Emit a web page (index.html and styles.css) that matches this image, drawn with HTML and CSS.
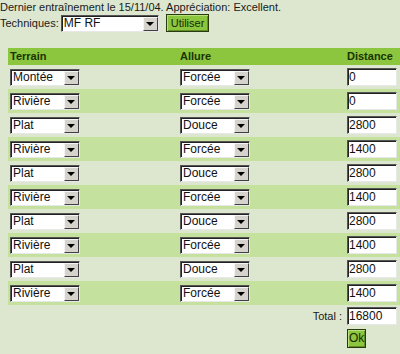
FILE: index.html
```html
<!DOCTYPE html>
<html lang="fr">
<head>
<meta charset="utf-8">
<link rel="stylesheet" href="styles.css">
</head>
<body>
<div class="info">Dernier entraînement le 15/11/04. Appréciation: Excellent.</div>
<div class="tech">
  <span class="lbl">Techniques:</span>
  <span class="sel sel-tech"><select><option>MF RF</option></select></span>
  <button class="btn btn-use">Utiliser</button>
</div>
<table class="grid">
  <thead>
    <tr><th class="c1">Terrain</th><th class="c2">Allure</th><th class="c3">Distance</th></tr>
  </thead>
  <tbody>
    <tr><td><span class="sel"><select><option>Montée</option></select></span></td><td><span class="sel"><select><option>Forcée</option></select></span></td><td><input class="num" value="0"></td></tr>
    <tr class="alt"><td><span class="sel"><select><option>Rivière</option></select></span></td><td><span class="sel"><select><option>Forcée</option></select></span></td><td><input class="num" value="0"></td></tr>
    <tr><td><span class="sel"><select><option>Plat</option></select></span></td><td><span class="sel"><select><option>Douce</option></select></span></td><td><input class="num" value="2800"></td></tr>
    <tr class="alt"><td><span class="sel"><select><option>Rivière</option></select></span></td><td><span class="sel"><select><option>Forcée</option></select></span></td><td><input class="num" value="1400"></td></tr>
    <tr><td><span class="sel"><select><option>Plat</option></select></span></td><td><span class="sel"><select><option>Douce</option></select></span></td><td><input class="num" value="2800"></td></tr>
    <tr class="alt"><td><span class="sel"><select><option>Rivière</option></select></span></td><td><span class="sel"><select><option>Forcée</option></select></span></td><td><input class="num" value="1400"></td></tr>
    <tr><td><span class="sel"><select><option>Plat</option></select></span></td><td><span class="sel"><select><option>Douce</option></select></span></td><td><input class="num" value="2800"></td></tr>
    <tr class="alt"><td><span class="sel"><select><option>Rivière</option></select></span></td><td><span class="sel"><select><option>Forcée</option></select></span></td><td><input class="num" value="1400"></td></tr>
    <tr><td><span class="sel"><select><option>Plat</option></select></span></td><td><span class="sel"><select><option>Douce</option></select></span></td><td><input class="num" value="2800"></td></tr>
    <tr class="alt"><td><span class="sel"><select><option>Rivière</option></select></span></td><td><span class="sel"><select><option>Forcée</option></select></span></td><td><input class="num" value="1400"></td></tr>
    <tr class="foot"><td colspan="2" class="total">Total :</td><td><input class="num" value="16800"></td></tr>
    <tr class="foot"><td colspan="2"></td><td><button class="btn btn-ok">Ok</button></td></tr>
  </tbody>
</table>
</body>
</html>
```
FILE: styles.css
```css
html, body {
  margin: 0;
  padding: 0;
  background: #dde7cf;
  font-family: "Liberation Sans", Arial, sans-serif;
  font-size: 11px;
  color: #1a1a1a;
  overflow: hidden;
}
.info {
  padding: 1px 0 0 0;
  height: 12px;
  line-height: 12px;
}
.tech {
  display: flex;
  align-items: center;
  height: 18px;
  margin-top: 1px;
}
.lbl {
  margin-right: 2px;
}
.sel {
  position: relative;
  display: inline-block;
  width: 70px;
  height: 17px;
  vertical-align: middle;
}
.sel-tech {
  width: 98px;
}
.sel select {
  -webkit-appearance: none;
  appearance: none;
  width: 100%;
  height: 100%;
  box-sizing: border-box;
  margin: 0;
  padding: 0 0 0 2px;
  background: #fff;
  border: 1px solid;
  border-color: #555 #e8e8e8 #e8e8e8 #555;
  box-shadow: inset 1px 1px 0 #222;
  border-radius: 0;
  font-family: "Liberation Sans", Arial, sans-serif;
  font-size: 12px;
  color: #111;
  outline: none;
}
.sel::after {
  content: "";
  position: absolute;
  right: 1px;
  top: 2px;
  width: 15px;
  height: 14px;
  box-sizing: border-box;
  background: #d6d3cc;
  border: 1px solid;
  border-color: #f4f4f4 #404040 #404040 #f4f4f4;
}
.sel::before {
  content: "";
  position: absolute;
  z-index: 1;
  right: 5px;
  top: 7px;
  width: 0;
  height: 0;
  border-left: 4px solid transparent;
  border-right: 4px solid transparent;
  border-top: 4px solid #000;
}
.btn {
  font-family: "Liberation Sans", Arial, sans-serif;
  font-size: 11px;
  color: #1a2a00;
  background: #8cc63f;
  border: 1px solid #2a3a10;
  box-shadow: inset 1px 1px 0 #b8e07c, inset -1px -1px 0 #5f8f25;
  border-radius: 0;
  margin: 0;
  padding: 0 4px;
  height: 18px;
}
.btn-use {
  margin-left: 7px;
}
.grid {
  margin: 16px 0 0 8px;
  width: 400px;
  table-layout: fixed;
  border-collapse: collapse;
  border-spacing: 0;
}
.grid th {
  background: #8cc63f;
  color: #1a3300;
  font-weight: bold;
  text-align: left;
  height: 17px;
  padding: 0 0 0 2px;
  line-height: 17px;
  box-sizing: border-box;
}
.grid th.c1 { width: 170px; }
.grid th.c2 { width: 167px; }
.grid th.c3 { width: 63px; }
.grid td {
  height: 24px;
  padding: 0 0 0 2px;
  vertical-align: middle;
}
.grid tr.alt td {
  background: #c4e29d;
}
.num {
  box-sizing: border-box;
  width: 50px;
  height: 18px;
  margin: 0;
  padding: 0 0 0 1px;
  background: #fff;
  border: 1px solid;
  border-color: #555 #e8e8e8 #e8e8e8 #555;
  box-shadow: inset 1px 1px 0 #222;
  font-family: "Liberation Sans", Arial, sans-serif;
  font-size: 12px;
  color: #111;
  outline: none;
  vertical-align: middle;
}
.grid tr.foot td {
  height: 22px;
}
.total {
  text-align: right;
  padding-right: 3px !important;
}
.btn-ok {
  padding: 0 1px;
  height: 19px;
  font-size: 12px;
}
```
